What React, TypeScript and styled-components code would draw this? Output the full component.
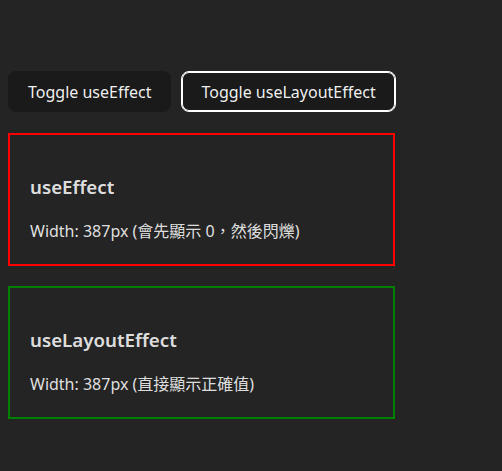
import React, { useState } from "react";
import styled, { createGlobalStyle, css } from "styled-components";

const Global = createGlobalStyle`
  html, body { background: #242424; }
  body {
    margin: 8px;
    font-family: "Segoe UI", "Noto Sans", "Noto Sans CJK TC", sans-serif;
    color: rgba(255, 255, 255, 0.87);
    line-height: 1.5;
    font-weight: 400;
  }
`;

const Page = styled.div`
  padding-top: 63px;
`;

const Toolbar = styled.div`
  display: flex;
  gap: 10px;
  margin-bottom: 21px;
`;

const ToggleButton = styled.button<{ $active?: boolean }>`
  font-family: inherit;
  font-size: 16px;
  font-weight: 400;
  line-height: 20px;
  color: rgba(255, 255, 255, 0.95);
  background: #1a1a1a;
  border: 1px solid transparent;
  border-radius: 8px;
  padding: 0.6em 19px;
  cursor: pointer;
  ${(p) =>
    p.$active &&
    css`
      border-color: #fff;
      box-shadow: inset 0 0 0 1px #fff;
    `}
`;

const BoxList = styled.div`
  display: flex;
  flex-direction: column;
  gap: 20px;
`;

const Box = styled.div<{ $color: string }>`
  box-sizing: border-box;
  width: 387px;
  height: 133px;
  border: 2px solid ${(p) => p.$color};
  padding: 20px;
`;

const Title = styled.h3`
  font-size: 1.17em;
  font-weight: 600;
  line-height: 28px;
  margin: 18px 0;
`;

const Info = styled.p`
  margin: 0;
  font-size: 16px;
`;

export default function App() {
  const [showA, setShowA] = useState(true);
  const [showB, setShowB] = useState(true);
  return (
    <Page>
      <Global />
      <Toolbar>
        <ToggleButton onClick={() => setShowA(!showA)}>Toggle useEffect</ToggleButton>
        <ToggleButton $active onClick={() => setShowB(!showB)}>
          Toggle useLayoutEffect
        </ToggleButton>
      </Toolbar>
      <BoxList>
        {showA && (
          <Box $color="red">
            <Title>useEffect</Title>
            <Info>Width: 387px (會先顯示 0，然後閃爍)</Info>
          </Box>
        )}
        {showB && (
          <Box $color="green">
            <Title>useLayoutEffect</Title>
            <Info>Width: 387px (直接顯示正確值)</Info>
          </Box>
        )}
      </BoxList>
    </Page>
  );
}
